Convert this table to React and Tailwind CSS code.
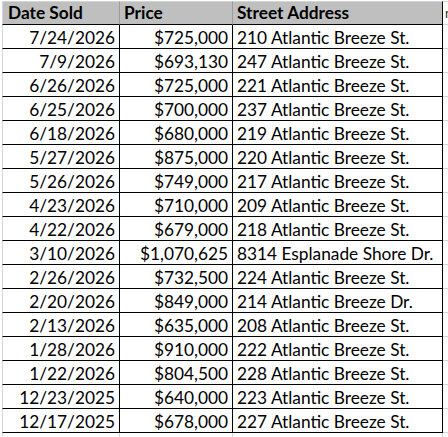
const sales = [
  ["7/24/2026", "$725,000", "210 Atlantic Breeze St."],
  ["7/9/2026", "$693,130", "247 Atlantic Breeze St."],
  ["6/26/2026", "$725,000", "221 Atlantic Breeze St."],
  ["6/25/2026", "$700,000", "237 Atlantic Breeze St."],
  ["6/18/2026", "$680,000", "219 Atlantic Breeze St."],
  ["5/27/2026", "$875,000", "220 Atlantic Breeze St."],
  ["5/26/2026", "$749,000", "217 Atlantic Breeze St."],
  ["4/23/2026", "$710,000", "209 Atlantic Breeze St."],
  ["4/22/2026", "$679,000", "218 Atlantic Breeze St."],
  ["3/10/2026", "$1,070,625", "8314 Esplanade Shore Dr."],
  ["2/26/2026", "$732,500", "224 Atlantic Breeze St."],
  ["2/20/2026", "$849,000", "214 Atlantic Breeze Dr."],
  ["2/13/2026", "$635,000", "208 Atlantic Breeze St."],
  ["1/28/2026", "$910,000", "222 Atlantic Breeze St."],
  ["1/22/2026", "$804,500", "228 Atlantic Breeze St."],
  ["12/23/2025", "$640,000", "223 Atlantic Breeze St."],
  ["12/17/2025", "$678,000", "227 Atlantic Breeze St."],
]

const App = () => {
  return (
    <div className="w-[448px] h-[437px] overflow-hidden bg-white pt-[1px] pl-[2px] font-['Lato','Liberation_Sans',sans-serif] text-[17.3px] text-black leading-none">
      {/* Header row */}
      <div className="flex h-[24px]">
        <div className="w-[118px] shrink-0 flex items-center pl-[5px] font-bold bg-[#bfbfbf] border-l border-t border-b border-r border-l-[#d4d4d4] border-t-[#d4d4d4] border-r-[#9b9b9b] border-b-black">
          Date Sold
        </div>
        <div className="w-[113px] shrink-0 flex items-center pl-[4px] font-bold bg-[#bfbfbf] border-t border-b border-r border-t-[#d4d4d4] border-r-[#9b9b9b] border-b-black">
          Price
        </div>
        <div className="w-[210px] shrink-0 flex items-center pl-[4px] font-bold bg-[#bfbfbf] border-t border-b border-r border-t-[#d4d4d4] border-r-black border-b-black">
          Street Address
        </div>
        <div className="flex-1 overflow-hidden flex items-center pl-[2px] border-t border-b border-[#d4d4d4] text-[#3a2a1a] text-[13px]">
          n
        </div>
      </div>

      {/* Data rows */}
      {sales.map((row, index) => (
        <div className="flex h-[24px]" key={index}>
          <div className="w-[118px] shrink-0 flex items-center justify-end pr-[4px] pt-[2px] border-l border-b border-r border-l-[#d4d4d4] border-b-black border-r-black">
            {row[0]}
          </div>
          <div className="w-[113px] shrink-0 flex items-center justify-end pr-[4px] pt-[2px] border-b border-r border-black">
            {row[1]}
          </div>
          <div className="w-[210px] shrink-0 flex items-center pl-[4px] pt-[2px] whitespace-nowrap border-b border-r border-black">
            {row[2]}
          </div>
          <div className="flex-1 border-b border-[#d4d4d4]" />
        </div>
      ))}

      {/* Empty gridline row below */}
      <div className="flex h-[24px]">
        <div className="w-[118px] shrink-0 border-l border-r border-[#d4d4d4]" />
        <div className="w-[113px] shrink-0 border-r border-[#d4d4d4]" />
        <div className="w-[210px] shrink-0 border-r border-[#d4d4d4]" />
      </div>
    </div>
  )
}

export default App
